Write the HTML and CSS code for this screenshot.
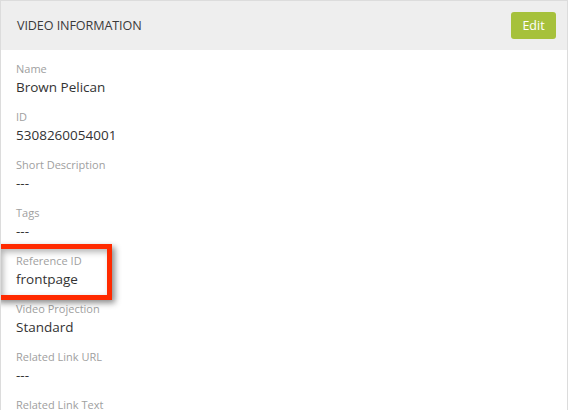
FILE: index.html
```html
<!DOCTYPE html>
<html>
<head>
<meta charset="utf-8">
<link rel="stylesheet" href="styles.css">
</head>
<body>
<div class="panel">
  <div class="panel-header">
    <h2 class="panel-title">VIDEO INFORMATION</h2>
    <button class="btn-edit">Edit</button>
  </div>
  <div class="panel-body">
    <div class="field"><div class="label">Name</div><div class="value">Brown Pelican</div></div>
    <div class="field"><div class="label">ID</div><div class="value">5308260054001</div></div>
    <div class="field"><div class="label">Short Description</div><div class="value">---</div></div>
    <div class="field"><div class="label">Tags</div><div class="value">---</div></div>
    <div class="field"><div class="label">Reference ID</div><div class="value">frontpage</div></div>
    <div class="field"><div class="label">Video Projection</div><div class="value">Standard</div></div>
    <div class="field"><div class="label">Related Link URL</div><div class="value">---</div></div>
    <div class="field"><div class="label">Related Link Text</div></div>
    <div class="highlight"></div>
  </div>
</div>
</body>
</html>
```

FILE: styles.css
```css
html, body {
  margin: 0;
  padding: 0;
  background: #ffffff;
  overflow: hidden;
}
body {
  font-family: "Open Sans", "Liberation Sans", sans-serif;
  width: 569px;
  height: 410px;
}
.panel {
  width: 566px;
  height: 409px;
  border: 1px solid #dcdcdc;
  border-bottom: none;
  position: relative;
  overflow: hidden;
}
.panel-header {
  background: #eeeeee;
  height: 49px;
  box-sizing: border-box;
  padding: 0 11px 0 16px;
  display: flex;
  align-items: center;
  justify-content: space-between;
}
.panel-title {
  margin: 0;
  font-size: 12.6px;
  font-weight: 400;
  color: #3a3a3a;
  letter-spacing: -0.1px;
}
.btn-edit {
  width: 45px;
  height: 27px;
  border: none;
  border-radius: 3px;
  background: #a6c13b;
  color: #ffffff;
  font-family: inherit;
  font-size: 12.5px;
  padding: 0;
  margin-top: -1px;
}
.panel-body {
  padding: 11px 16px 0 15px;
  position: relative;
}
.field {
  margin-bottom: 12px;
}
.label {
  font-size: 11px;
  line-height: 16px;
  color: #a0a0a0;
}
.value {
  font-size: 13.5px;
  line-height: 20px;
  color: #333333;
}
.highlight {
  position: absolute;
  left: -6px;
  top: 194px;
  width: 107px;
  height: 46px;
  border: 5px solid #ff2a00;
  box-shadow: 3px 3px 6px rgba(0,0,0,0.45), inset 3px 3px 6px rgba(0,0,0,0.3);
}
```
